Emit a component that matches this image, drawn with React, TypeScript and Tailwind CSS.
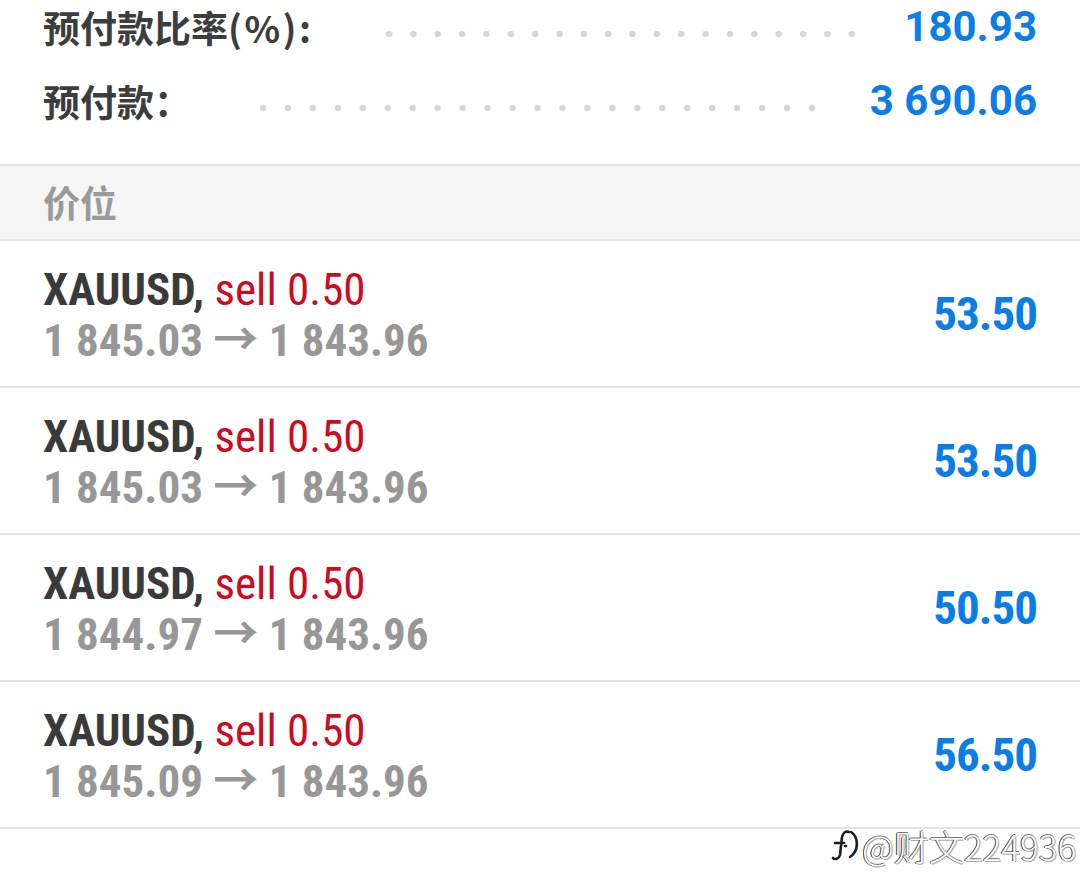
import React from "react";

const cond = { fontFamily: '"Roboto Condensed", Roboto, "Noto Sans CJK SC", sans-serif' } as const;

function InfoRow({ label, suffix, value, h, ml, mr }: { label: string; suffix?: string; value: string; h: string; ml: string; mr: string }) {
  return (
    <div className={`flex items-center px-[43px] ${h}`}>
      <div className="text-[37px] font-bold text-[#3d3d3d] leading-none whitespace-nowrap" style={{ fontFamily: '"Noto Sans CJK SC", sans-serif' }}>
        {label}
        {suffix && <span className="tracking-[2.5px]">{suffix}</span>}
      </div>
      <div className={`flex-1 h-[8px] mt-[14px] ${ml} ${mr} bg-[radial-gradient(circle,#d6d6d6_3px,transparent_3.6px)] bg-[length:24px_8px] bg-repeat-space`} />
      <div className="text-[42px] font-bold text-[#0a7de6] leading-none" style={{ fontFamily: "Roboto, sans-serif" }}>{value}</div>
    </div>
  );
}

function Trade({ from, profit }: { from: string; profit: string }) {
  return (
    <>
      <div className="flex items-center justify-between px-[43px] h-[145px]">
        <div className="flex flex-col pt-[3px]" style={cond}>
          <div className="text-[45px] leading-[51px] font-bold text-[#3a3a3a] whitespace-nowrap">
            XAUUSD, <span className="font-normal text-[#d0091d]">sell 0.50</span>
          </div>
          <div className="text-[45px] leading-[51px] font-bold text-[#979797] whitespace-nowrap">
            {from} → 1 843.96
          </div>
        </div>
        <div className="text-[47px] font-bold text-[#0a7de6] leading-none tracking-[-1px]" style={cond}>{profit}</div>
      </div>
      <div className="h-[2px] bg-[#e4e4e4]" />
    </>
  );
}

export default function App() {
  return (
    <div className="relative w-[1080px] h-[896px] overflow-hidden bg-white" style={{ fontFamily: 'Roboto, "Noto Sans CJK SC", sans-serif' }}>
      <InfoRow label="预付款比率" suffix="(%):" value="180.93" h="h-[54px]" ml="ml-[63px]" mr="mr-[40px]" />
      <InfoRow label="预付款：" value="3 690.06" h="h-[94px]" ml="ml-[60px]" mr="mr-[46px]" />
      <div className="h-[16px]" />
      <div className="h-[2px] bg-[#e4e4e4]" />
      <div className="h-[73px] bg-[#f5f5f5] flex items-center px-[43px]">
        <span className="text-[37px] font-bold text-[#9a9a9a] leading-none" style={{ fontFamily: '"Noto Sans CJK SC", sans-serif' }}>价位</span>
      </div>
      <div className="h-[2px] bg-[#e4e4e4]" />
      <Trade from="1 845.03" profit="53.50" />
      <Trade from="1 845.03" profit="53.50" />
      <Trade from="1 844.97" profit="50.50" />
      <Trade from="1 845.09" profit="56.50" />
      <div className="absolute left-[831px] top-[827px] flex items-center gap-[3px]">
        <svg width="28" height="36" viewBox="0 0 28 36" fill="none" stroke="#1e1e1e" strokeWidth="2.6" strokeLinecap="round" strokeLinejoin="round">
          <path d="M2 31 C4 33 8 32 9 28 L11 10 C12 5 15 4 18 5" />
          <path d="M4 16 L13 16" />
          <path d="M14 19 L15 19" />
          <path d="M20 5 C28 10 28 24 19 30" />
        </svg>
        <span
          className="text-[35px] text-white leading-none [text-shadow:-1px_0_0_#333,0_-1px_0_#777,1px_1px_0_#aaa]"
          style={{ fontFamily: '"Noto Sans CJK SC", sans-serif', fontWeight: 300 }}
        >
          @财文224936
        </span>
      </div>
    </div>
  );
}
